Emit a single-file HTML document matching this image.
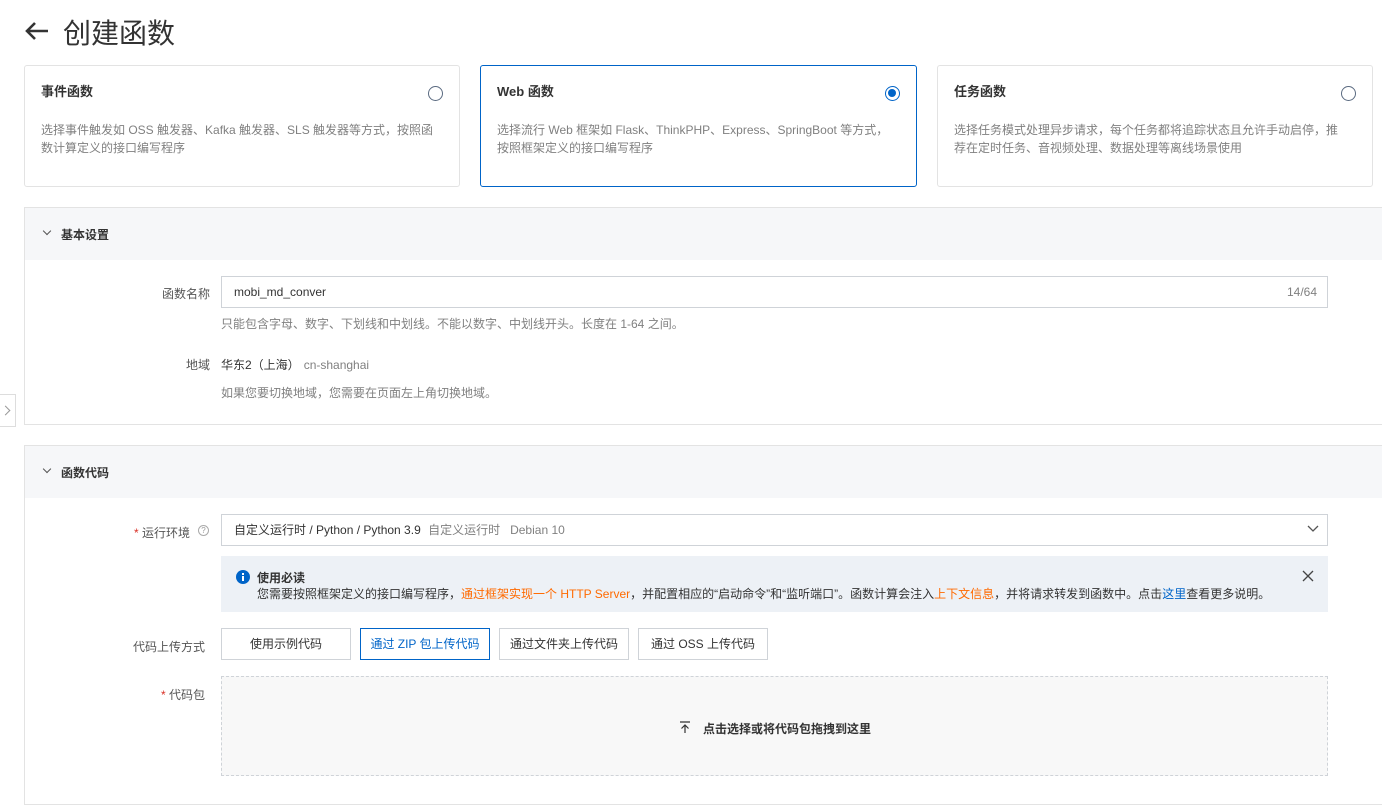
<!DOCTYPE html>
<html><head><meta charset="utf-8"><style>
*{box-sizing:border-box;margin:0;padding:0}
body{width:1382px;height:785px;overflow:hidden;background:#fff;font-family:"Liberation Sans","Noto Sans CJK SC",sans-serif;color:#333;font-size:12px;position:relative}
.abs{position:absolute}
.card{position:absolute;top:65px;height:122px;border:1px solid #e3e3e3;border-radius:3px;background:#fff}
.card.sel{border-color:#0064c8}
.card h3{position:absolute;left:16px;top:15px;font-size:13px;font-weight:bold;color:#333}
.card p{position:absolute;left:16px;top:55px;font-size:12px;line-height:18px;color:#808080;width:395px}
.radio{position:absolute;right:16px;top:20px;width:15px;height:15px;border:1px solid #5a6a80;border-radius:50%}
.radio.on{border:1.5px solid #0064c8}
.radio.on::after{content:"";position:absolute;left:2px;top:2px;width:8px;height:8px;border-radius:50%;background:#0064c8}
.sec{position:absolute;left:24px;width:1370px;border:1px solid #e3e3e3;background:#fff}
.sechd{height:52px;background:#f6f7f9;position:relative}
.sechd span{position:absolute;left:36px;top:18px;font-size:12px;font-weight:bold;color:#333}
.chev{position:absolute;left:19px;top:20px;width:6px;height:6px;border-right:1px solid #555;border-bottom:1px solid #555;transform:rotate(45deg)}
.lbl{position:absolute;font-size:12px;color:#555;text-align:right}
.inp{position:absolute;border:1px solid #cfd3d8;background:#fff;height:32px;font-size:12px;line-height:30px;padding-left:12px;color:#333}
.hint{position:absolute;font-size:12px;color:#808080}
.btn{position:absolute;top:628px;height:32px;border:1px solid #cfd3d8;font-size:12px;line-height:30px;text-align:center;color:#333;background:#fff}
</style></head><body>
<svg class="abs" style="left:24px;top:20px" width="26" height="22" viewBox="0 0 26 22"><path d="M24 11H3M11 3L3 11l8 8" fill="none" stroke="#333" stroke-width="2.6"/></svg>
<div class="abs" style="left:63px;top:12px;font-size:28px;color:#333">创建函数</div>

<div class="card" style="left:24px;width:436px"><h3>事件函数</h3><div class="radio"></div><p>选择事件触发如 OSS 触发器、Kafka 触发器、SLS 触发器等方式，按照函数计算定义的接口编写程序</p></div>
<div class="card sel" style="left:480px;width:437px"><h3>Web 函数</h3><div class="radio on"></div><p>选择流行 Web 框架如 Flask、ThinkPHP、Express、SpringBoot 等方式，按照框架定义的接口编写程序</p></div>
<div class="card" style="left:937px;width:436px"><h3>任务函数</h3><div class="radio"></div><p>选择任务模式处理异步请求，每个任务都将追踪状态且允许手动启停，推荐在定时任务、音视频处理、数据处理等离线场景使用</p></div>

<div class="sec" style="top:207px;height:218px"><div class="sechd"><div class="chev"></div><span>基本设置</span></div></div>
<div class="lbl" style="left:140px;width:70px;top:285px">函数名称</div>
<div class="inp" style="left:221px;top:276px;width:1107px">mobi_md_conver<span style="position:absolute;right:10px;color:#808080">14/64</span></div>
<div class="hint" style="left:221px;top:315px">只能包含字母、数字、下划线和中划线。不能以数字、中划线开头。长度在 1-64 之间。</div>
<div class="lbl" style="left:140px;width:70px;top:356px">地域</div>
<div class="abs" style="left:221px;top:356px;color:#333">华东2（上海）<span style="color:#808080;margin-left:4px">cn-shanghai</span></div>
<div class="hint" style="left:221px;top:384px">如果您要切换地域，您需要在页面左上角切换地域。</div>

<div class="abs" style="left:0;top:394px;width:16px;height:33px;border:1px solid #ddd;border-left:none;background:#fff"><div style="position:absolute;left:2px;top:12px;width:7px;height:7px;border-right:1px solid #999;border-top:1px solid #999;transform:rotate(45deg)"></div></div>

<div class="sec" style="top:445px;height:360px"><div class="sechd"><div class="chev"></div><span>函数代码</span></div></div>
<div class="lbl" style="left:120px;width:70px;top:524px"><span style="color:#d93026">*</span> 运行环境</div>
<div class="abs" style="left:198px;top:525px;width:11px;height:11px;border:1px solid #aaa;border-radius:50%;font-size:8px;line-height:9px;text-align:center;color:#999">?</div>
<div class="inp" style="left:221px;top:514px;width:1107px">自定义运行时 / Python / Python 3.9 <span style="color:#808080;margin-left:4px">自定义运行时</span><span style="color:#808080;margin-left:10px">Debian 10</span>
<svg style="position:absolute;right:8px;top:10px" width="12" height="8" viewBox="0 0 12 8"><path d="M1 1l5 5 5-5" fill="none" stroke="#555" stroke-width="1.3"/></svg></div>
<div class="abs" style="left:221px;top:556px;width:1107px;height:56px;background:#edf1f6"></div>
<svg class="abs" style="left:236px;top:570px" width="14" height="14" viewBox="0 0 14 14"><circle cx="7" cy="7" r="7" fill="#0064c8"/><rect x="6" y="6" width="2" height="5" fill="#fff"/><rect x="6" y="3" width="2" height="2" fill="#fff"/></svg>
<div class="abs" style="left:257px;top:569px;font-weight:bold;color:#333">使用必读</div>
<div class="abs" style="left:257px;top:585px;color:#333;white-space:nowrap">您需要按照框架定义的接口编写程序，<span style="color:#ff6a00">通过框架实现一个 HTTP Server</span>，并配置相应的“启动命令”和“监听端口”。函数计算会注入<span style="color:#ff6a00">上下文信息</span>，并将请求转发到函数中。点击<span style="color:#0064c8">这里</span>查看更多说明。</div>
<svg class="abs" style="left:1302px;top:570px" width="12" height="12" viewBox="0 0 12 12"><path d="M1 1l10 10M11 1L1 11" stroke="#444" stroke-width="1.3"/></svg>
<div class="lbl" style="left:120px;width:85px;top:638px">代码上传方式</div>
<div class="btn" style="left:221px;width:130px">使用示例代码</div>
<div class="btn" style="left:360px;width:130px;border-color:#0064c8;color:#0064c8">通过 ZIP 包上传代码</div>
<div class="btn" style="left:499px;width:130px">通过文件夹上传代码</div>
<div class="btn" style="left:638px;width:130px">通过 OSS 上传代码</div>
<div class="lbl" style="left:120px;width:85px;top:686px"><span style="color:#d93026">*</span> 代码包</div>
<div class="abs" style="left:221px;top:676px;width:1107px;height:100px;border:1px dashed #cfd3d8;background:#f8f8f8"></div>
<svg class="abs" style="left:679px;top:721px" width="12" height="13" viewBox="0 0 12 13"><path d="M1 1h10M6 12V4M2.5 7.5L6 4l3.5 3.5" fill="none" stroke="#333" stroke-width="1.2"/></svg>
<div class="abs" style="left:703px;top:720px;font-weight:bold;color:#333">点击选择或将代码包拖拽到这里</div>
</body></html>
